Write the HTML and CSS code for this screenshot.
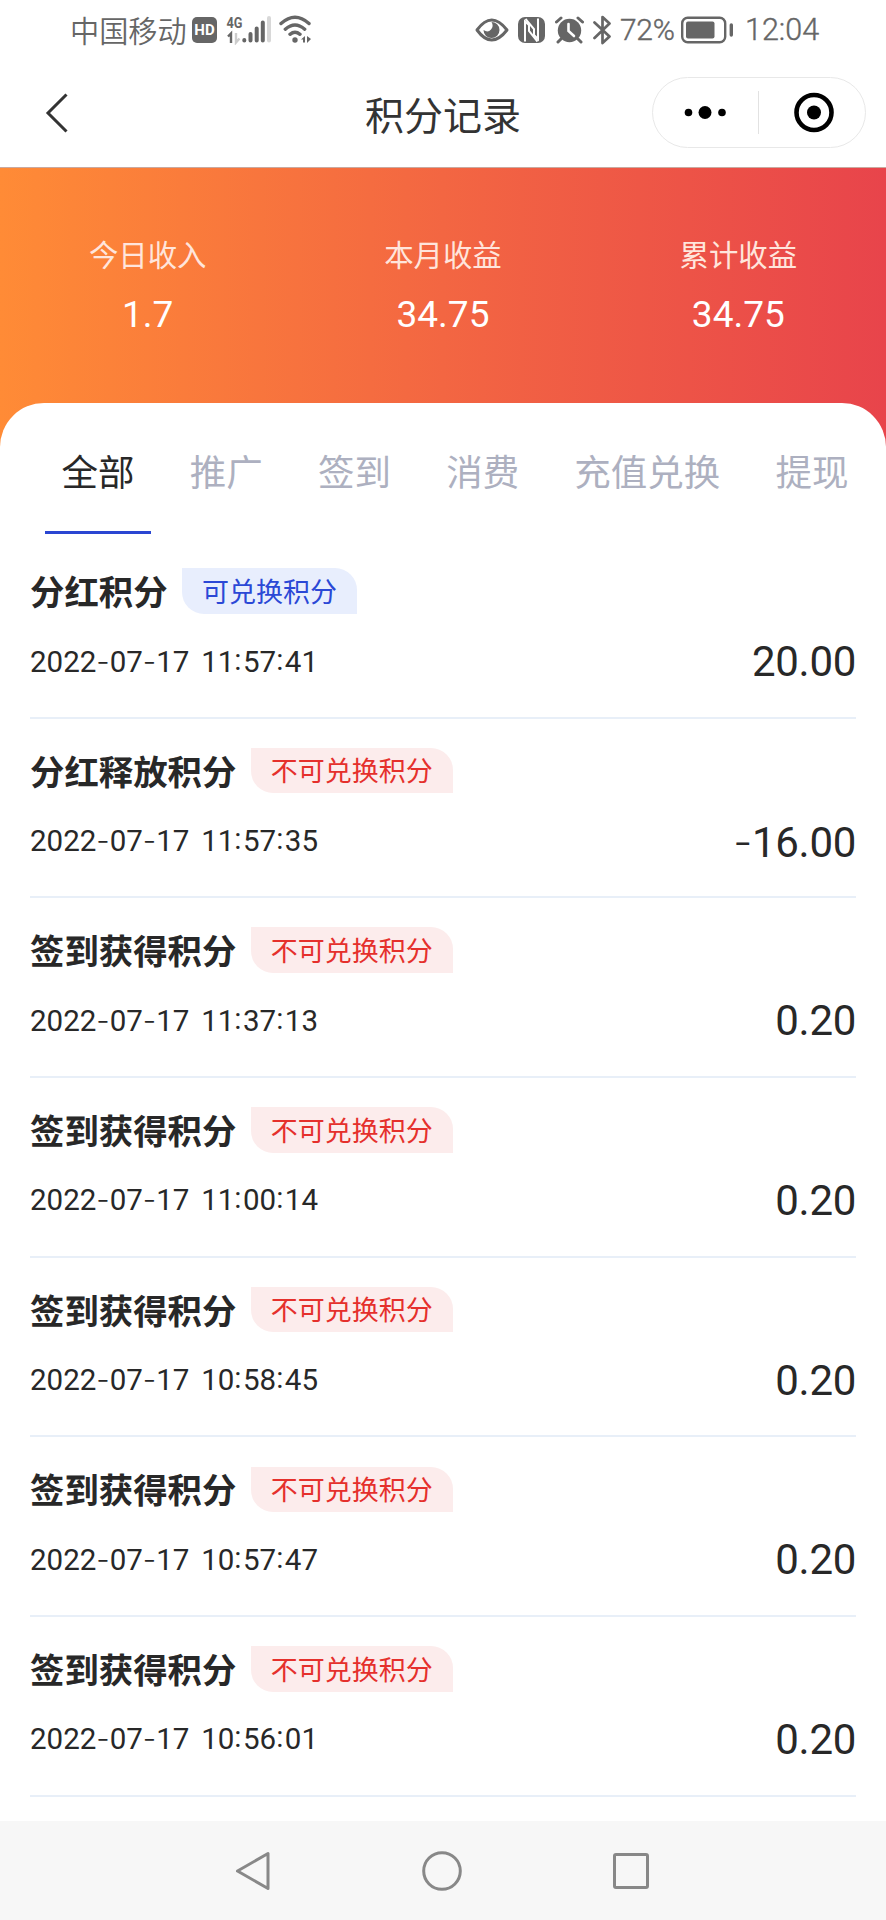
FILE: index.html
```html
<!DOCTYPE html>
<html lang="zh-CN">
<head>
<meta charset="utf-8">
<title>积分记录</title>
<link rel="stylesheet" href="styles.css">
</head>
<body>
<div class="screen">
  <div class="status">
    <div class="status-left">
      <span class="carrier">中国移动</span>
      <span class="hd">HD</span>
      <svg class="signal" width="46" height="30" viewBox="226 15 46 30">
        <text class="net" x="226.500" y="27.500" textLength="16" lengthAdjust="spacingAndGlyphs">4G</text>
        <path d="M228 36.500l3-3v9.500" fill="none" stroke="#666" stroke-width="2.400"/>
        <path d="M236 33v9.500l3.500-4" fill="none" stroke="#ccc" stroke-width="2.400"/>
        <g stroke="#666" stroke-width="4" stroke-linecap="round">
          <path d="M244.300 40v.5M250.500 34v6.500M256.700 28.500v12M262.800 22.500v18"/>
          <path d="M269 18v22.500" stroke="#d8d8d8"/>
        </g>
      </svg>
      <svg class="wifi" width="34" height="30" viewBox="279 15 34 30">
        <g fill="none" stroke="#666" stroke-width="3.400" stroke-linecap="round">
          <path d="M281 23.500q14-12.500 28 0M285.300 29.200q9.700-8.500 19.400 0M290 34.300q5-4 10 0"/>
        </g>
        <circle cx="295" cy="40" r="2.700" fill="#666"/>
        <path d="M301 39.500l4-3.500v6.500h-2v-3zM307 36v7l4-4z" fill="#666"/>
      </svg>
    </div>
    <div class="status-right">
      <svg width="34" height="24" viewBox="475 18 34 24">
        <path d="M477 30q14.500-20 30 0q-15.500 20-30 0z" fill="none" stroke="#666" stroke-width="3" stroke-linejoin="round"/>
        <path d="M491.500 22a8 8 0 1 1-8 8q4.500 3 7.500-.5q3-3.500.5-7.500z" fill="#666"/>
      </svg>
      <svg class="nfc" width="27" height="26" viewBox="0 0 27 26">
        <rect width="27" height="26" rx="7" fill="#666"/>
        <path d="M7 24.500V4.500l4 3.500v6l8.500 10.500" fill="none" stroke="#fff" stroke-width="2"/>
        <path d="M7.500 2l8.500 10v6l4 4V1.500" fill="none" stroke="#fff" stroke-width="2"/>
      </svg>
      <svg class="alarm" width="29" height="28" viewBox="0 0 29 28">
        <circle cx="14.500" cy="14.500" r="11.700" fill="#666"/>
        <path d="M1.500 6l4.500-4M27.500 6L23 2M6 23l-3 3M23 23l3 3" stroke="#666" stroke-width="3" stroke-linecap="round"/>
        <path d="M13.500 8v7l5.500 5" fill="none" stroke="#fff" stroke-width="2.600" stroke-linecap="round"/>
      </svg>
      <svg class="bt" width="19" height="30" viewBox="0 0 19 30">
        <path d="M1.500 7.500L16.500 21.500L9.500 28V2l7 6.500L1.500 23" fill="none" stroke="#666" stroke-width="2.700" stroke-linecap="round" stroke-linejoin="round"/>
      </svg>
      <span class="pct">72%</span>
      <svg class="battery" width="53" height="28" viewBox="0 0 53 28">
        <rect x="1.200" y="1.700" width="43" height="24.600" rx="5.500" fill="none" stroke="#666" stroke-width="2.400"/>
        <rect x="5" y="5.500" width="28.500" height="17" rx="2" fill="#666"/>
        <path d="M50.300 9v10" stroke="#666" stroke-width="3.400" stroke-linecap="round"/>
      </svg>
      <span class="clock">12:04</span>
    </div>
  </div>

  <div class="navbar">
    <svg class="back" width="24" height="42" viewBox="0 0 24 42"><path d="M21.500 2.500L3 21l18.500 18.500" fill="none" stroke="#333" stroke-width="3"/></svg>
    <h1 class="title">积分记录</h1>
    <div class="capsule">
      <svg class="more" width="105" height="69" viewBox="0 0 105 69"><circle cx="35.500" cy="34.500" r="3.800"/><circle cx="52" cy="34.500" r="6.500"/><circle cx="69" cy="34.500" r="3.800"/></svg>
      <span class="split"></span>
      <svg class="close" width="105" height="69" viewBox="0 0 105 69"><circle cx="55" cy="34.500" r="17.500" fill="none" stroke="#000" stroke-width="4.600"/><circle cx="55" cy="34.500" r="7"/></svg>
    </div>
  </div>

  <div class="banner">
    <div class="stat"><span class="stat-label">今日收入</span><span class="stat-value">1.7</span></div>
    <div class="stat"><span class="stat-label">本月收益</span><span class="stat-value">34.75</span></div>
    <div class="stat"><span class="stat-label">累计收益</span><span class="stat-value">34.75</span></div>
  </div>

  <div class="card">
    <div class="tabs">
      <div class="tab active">全部</div>
      <div class="tab">推广</div>
      <div class="tab">签到</div>
      <div class="tab">消费</div>
      <div class="tab">充值兑换</div>
      <div class="tab">提现</div>
    </div>
    <div class="list">
      <div class="row">
        <div class="head"><span class="name">分红积分</span><span class="tag blue">可兑换积分</span></div>
        <div class="info"><span class="date">2022<i>-</i>07<i>-</i>17 11<b>:</b>57<b>:</b>41</span><span class="amount">20.00</span></div>
      </div>
      <div class="row">
        <div class="head"><span class="name">分红释放积分</span><span class="tag red">不可兑换积分</span></div>
        <div class="info"><span class="date">2022<i>-</i>07<i>-</i>17 11<b>:</b>57<b>:</b>35</span><span class="amount"><i>-</i>16.00</span></div>
      </div>
      <div class="row">
        <div class="head"><span class="name">签到获得积分</span><span class="tag red">不可兑换积分</span></div>
        <div class="info"><span class="date">2022<i>-</i>07<i>-</i>17 11<b>:</b>37<b>:</b>13</span><span class="amount">0.20</span></div>
      </div>
      <div class="row">
        <div class="head"><span class="name">签到获得积分</span><span class="tag red">不可兑换积分</span></div>
        <div class="info"><span class="date">2022<i>-</i>07<i>-</i>17 11<b>:</b>00<b>:</b>14</span><span class="amount">0.20</span></div>
      </div>
      <div class="row">
        <div class="head"><span class="name">签到获得积分</span><span class="tag red">不可兑换积分</span></div>
        <div class="info"><span class="date">2022<i>-</i>07<i>-</i>17 10<b>:</b>58<b>:</b>45</span><span class="amount">0.20</span></div>
      </div>
      <div class="row">
        <div class="head"><span class="name">签到获得积分</span><span class="tag red">不可兑换积分</span></div>
        <div class="info"><span class="date">2022<i>-</i>07<i>-</i>17 10<b>:</b>57<b>:</b>47</span><span class="amount">0.20</span></div>
      </div>
      <div class="row">
        <div class="head"><span class="name">签到获得积分</span><span class="tag red">不可兑换积分</span></div>
        <div class="info"><span class="date">2022<i>-</i>07<i>-</i>17 10<b>:</b>56<b>:</b>01</span><span class="amount">0.20</span></div>
      </div>
    </div>
  </div>

  <div class="sysnav">
    <svg width="38" height="42" viewBox="0 0 38 42"><path d="M34 3.500v35L3.500 21z" fill="none" stroke="#888" stroke-width="3" stroke-linejoin="round"/></svg>
    <svg width="42" height="42" viewBox="0 0 42 42"><circle cx="21" cy="21" r="18.300" fill="none" stroke="#888" stroke-width="3"/></svg>
    <svg width="38" height="42" viewBox="0 0 38 42"><rect x="2.500" y="4.500" width="33" height="33" rx="1.500" fill="none" stroke="#888" stroke-width="3"/></svg>
  </div>
</div>
</body>
</html>
```
FILE: styles.css
```css
* { box-sizing: border-box; }
body { margin: 0; background: #fff; color: #282828; font-family: Roboto, "Noto Sans CJK SC", sans-serif; }
svg { display: block; flex: none; }
.screen { width: 886px; height: 1920px; display: flex; flex-direction: column; overflow: hidden; }

.status { height: 60px; display: flex; justify-content: space-between; padding: 0 68px 0 70px; color: #666; }
.status-left, .status-right { display: flex; align-items: center; height: 60px; white-space: nowrap; }
.carrier { font: 350 29.200px/58px "Noto Sans CJK SC", sans-serif; width: 122px; height: 60px; }
.hd { width: 25px; height: 26px; border-radius: 5px; background: #666; color: #fff; font: bold 15px/26px Roboto, sans-serif; text-align: center; }
.signal { margin-left: 9px; }
.net { font: bold 15px Roboto, sans-serif; fill: #666; }
.wifi { margin-left: 7px; }
.nfc { margin-left: 9px; }
.alarm { margin-left: 10px; }
.bt { margin-left: 9px; }
.pct { width: 60px; padding-left: 8px; font-size: 30px; font-weight: 300; line-height: 62px; letter-spacing: -.3px; -webkit-text-stroke: .4px #666; }
.battery { margin-left: 9px; }
.clock { width: 84px; padding-left: 11px; font-size: 30.500px; font-weight: 300; line-height: 62px; -webkit-text-stroke: .4px #666; }

.navbar { height: 107px; display: flex; justify-content: space-between; padding: 17px 20px 0 45px; }
.back { margin-top: 15px; }
.title { margin: 0 0 0 165px; font: 400 39px/72px "Noto Sans CJK SC", sans-serif; color: #333; }
.capsule { width: 214px; height: 71px; border: 1.500px solid #e8e8e8; border-radius: 36px; display: flex; align-items: center; }
.split { width: 1px; height: 43px; background: #e2e2e2; }

.banner { height: 280px; flex: none; display: flex; background: linear-gradient(90deg, #ff8b36, #f36642 50%, #e8444b); border-top: 1px solid #c9a9a0; }
.stat { flex: 1; display: flex; flex-direction: column; align-items: center; color: #fff; padding-top: 67px; }
.stat-label { font-size: 29.400px; line-height: 42px; color: #ffe5dc; }
.stat-value { font-size: 37px; line-height: 44px; margin-top: 16px; }

.card { flex: 1; margin-top: -44px; background: #fff; border-radius: 44px 44px 0 0; }
.tabs { display: flex; padding-left: 34px; height: 131px; font-size: 36.500px; line-height: 141px; white-space: nowrap; color: #adb0c0; }
.tab { padding: 0 27.600px; }
.active { color: #282828; background: linear-gradient(#2a46d2, #2a46d2) center bottom / 106px 3px no-repeat; }
.list { padding: 0 30px; }
.row { height: 179.700px; padding-top: 29.500px; border-bottom: 2.500px solid #e8eff8; }
.row:first-child { height: 184.500px; padding-top: 34.500px; }
.head { display: flex; align-items: center; height: 45px; }
.name { font-size: 34.400px; font-weight: 700; line-height: 45px; padding-top: 5px; }
.tag { margin-left: 14.500px; padding: 2.500px 20px 0; height: 45.500px; font-size: 27px; line-height: 45px; border-radius: 0 22px 0 22px; }
.blue { color: #2b48d6; background: #e8eefd; }
.red { color: #e5302c; background: #fcecec; }
.info { display: flex; justify-content: space-between; align-items: center; height: 60px; margin-top: 18px; }
.date { font-size: 29.500px; word-spacing: 4.500px; padding-bottom: 2px; }
.amount { font-size: 42px; letter-spacing: -.3px; }
.info i { font-family: Inter, sans-serif; font-style: normal; font-weight: 300; }
.info b { font-weight: 400; position: relative; top: -2px; letter-spacing: 1.500px; }

.sysnav { height: 99px; flex: none; background: #f7f7f7; display: flex; align-items: center; justify-content: space-between; padding: 0 236px 0 234px; }
```
